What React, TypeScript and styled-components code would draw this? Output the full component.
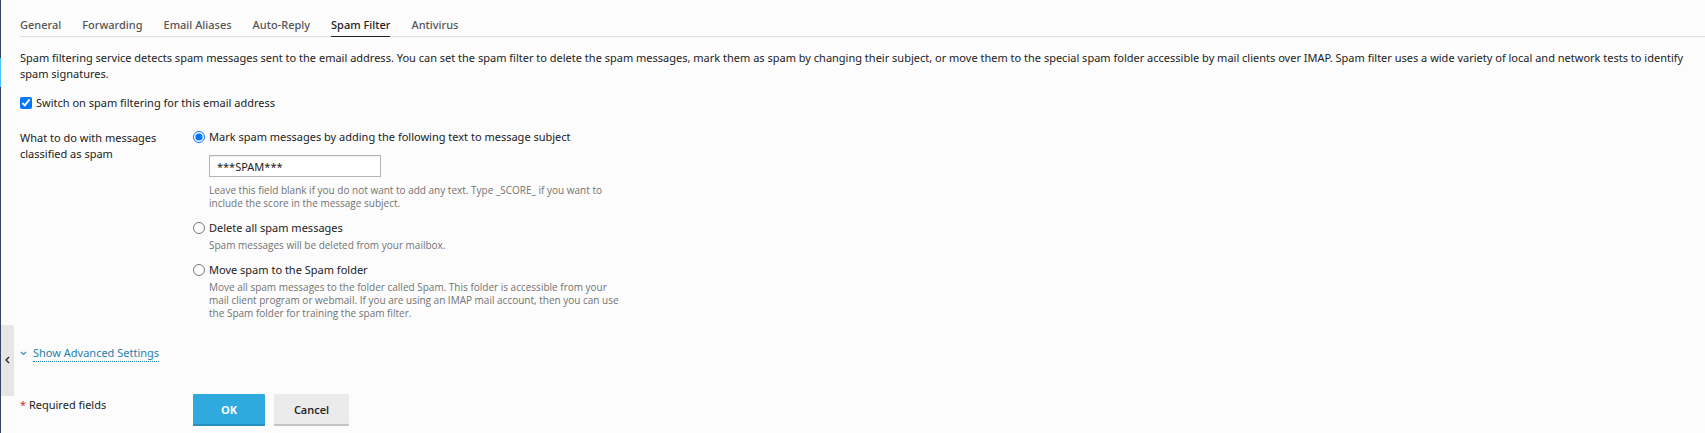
import React from "react";
import styled, { createGlobalStyle, css } from "styled-components";

const Global = createGlobalStyle`
  * { box-sizing: border-box; }
  html, body, #root { height: 100%; }
  body { margin: 0; background: #fcfcfc; color: #222; font: 11px/16px "Noto Sans", "Open Sans", sans-serif; }
  p { margin: 0; }
`;
const Shell = styled.div`display: flex; min-height: 100%;`;
const Rail = styled.aside`
  position: relative; flex: 0 0 1px; background: #35445c;
`;
const ActiveMark = styled.span`
  position: absolute; left: 0; top: 58px; width: 1px; height: 29px; background: #4cc4ff;
`;
const Collapse = styled.button`
  position: absolute; left: 1px; top: 325px; width: 13px; height: 71px; padding: 0 1px 2px 0; border: 0;
  border-radius: 0 2px 2px 0; background: #e6e6e6; color: #222;
  display: flex; align-items: center; justify-content: center;
`;
const Main = styled.main`flex: 1; min-width: 0; padding: 16px 0 0 19px;`;
const Tabs = styled.nav`
  display: flex; gap: 21px; height: 21px; border-bottom: 1px solid #dcdcdc;
`;
const Tab = styled.a<{ $active?: boolean }>`
  height: 21px; line-height: 18px; font-weight: 500; color: #555; text-decoration: none;
  ${p => p.$active && css`color: #222; border-bottom: 1px solid #222;`}
`;
const Intro = styled.p`margin: 13px 0; padding-right: 4px;`;
const Check = styled.label`display: flex; align-items: center; gap: 4px;`;
const Box = styled.input`width: 12px; height: 12px; margin: 0; flex: none;`;
const Row = styled.div`display: flex;`;
const Choices = styled(Row)`margin-top: 18px;`;
const Side = styled.div<{ $top: number }>`
  flex: 0 0 173px; padding: ${p => p.$top}px 20px 0 0;
`;
const Group = styled.div`display: flex; flex-direction: column; width: 429px; gap: 10px;`;
const Option = styled.div``;
const Details = styled.div`padding-left: 16px;`;
const Hint = styled.p`
  margin-top: 3px; font-family: "Open Sans", sans-serif; font-size: 10px; line-height: 13px; color: #737373;
`;
const Subject = styled.input`
  display: block; width: 172px; height: 22px; margin: 10px 0 7px; padding: 0 7px;
  border: 1px solid #b4b4b4; background: #fff; box-shadow: inset 0 1px 1px #eee;
  font: inherit; color: #222;
`;
const Advanced = styled.div`display: flex; align-items: center; gap: 6px; margin: 25px 0 32px;`;
const Link = styled.a`color: #1f81ab; text-decoration: none; border-bottom: 1px dotted #1f81ab;`;
const Required = styled.span`color: #d02f2f;`;
const Actions = styled.div`display: flex; gap: 9px;`;
const Button = styled.button<{ $primary?: boolean }>`
  height: 32px; padding: 0; width: ${p => (p.$primary ? 72 : 75)}px; border: 0; border-radius: 1px;
  box-shadow: inset 0 -2px ${p => (p.$primary ? "#2590bf" : "#c4c4c4")};
  background: ${p => (p.$primary ? "#2faadf" : "#ebebeb")};
  color: ${p => (p.$primary ? "#fff" : "#222")};
  font: ${p => (p.$primary ? 700 : 600)} 11px/16px "Open Sans", sans-serif;
`;
const tabs = ["General", "Forwarding", "Email Aliases", "Auto-Reply", "Spam Filter", "Antivirus"];

export default function App() {
  return (
    <>
      <Global />
      <Shell>
        <Rail>
          <ActiveMark />
          <Collapse aria-label="Collapse sidebar">
            <svg width="5" height="8" viewBox="0 0 5 8" fill="none" stroke="currentColor" strokeWidth="1.3"><path d="M4 1L1 4l3 3" /></svg>
          </Collapse>
        </Rail>
        <Main>
          <Tabs>{tabs.map(t => <Tab key={t} href="#" $active={t === "Spam Filter"}>{t}</Tab>)}</Tabs>
          <Intro>
            Spam filtering service detects spam messages sent to the email address. You can set the spam filter to delete the spam messages, mark them as spam by changing their subject, or move them to the special spam folder accessible by mail clients over IMAP. Spam filter uses a wide variety of local and network tests to identify spam signatures.
          </Intro>
          <Check><Box type="checkbox" defaultChecked />Switch on spam filtering for this email address</Check>
          <Choices>
            <Side $top={1}>What to do with messages classified as spam</Side>
            <Group role="radiogroup" aria-label="What to do with messages classified as spam">
              <Option>
                <Check><Box type="radio" name="action" defaultChecked />Mark spam messages by adding the following text to message subject</Check>
                <Details>
                  <Subject aria-label="Subject text" defaultValue="***SPAM***" />
                  <Hint>Leave this field blank if you do not want to add any text. Type _SCORE_ if you want to include the score in the message subject.</Hint>
                </Details>
              </Option>
              <Option>
                <Check><Box type="radio" name="action" />Delete all spam messages</Check>
                <Details><Hint>Spam messages will be deleted from your mailbox.</Hint></Details>
              </Option>
              <Option>
                <Check><Box type="radio" name="action" />Move spam to the Spam folder</Check>
                <Details><Hint>Move all spam messages to the folder called Spam. This folder is accessible from your mail client program or webmail. If you are using an IMAP mail account, then you can use the Spam folder for training the spam filter.</Hint></Details>
              </Option>
            </Group>
          </Choices>
          <Advanced>
            <svg width="7" height="5" viewBox="0 0 7 5" fill="none" stroke="#2c96c0" strokeWidth="1.2"><path d="M1 1l2.500 2.500L6 1" /></svg>
            <Link href="#">Show Advanced Settings</Link>
          </Advanced>
          <Row>
            <Side $top={3}><Required>*</Required> Required fields</Side>
            <Actions><Button $primary>OK</Button><Button>Cancel</Button></Actions>
          </Row>
        </Main>
      </Shell>
    </>
  );
}
